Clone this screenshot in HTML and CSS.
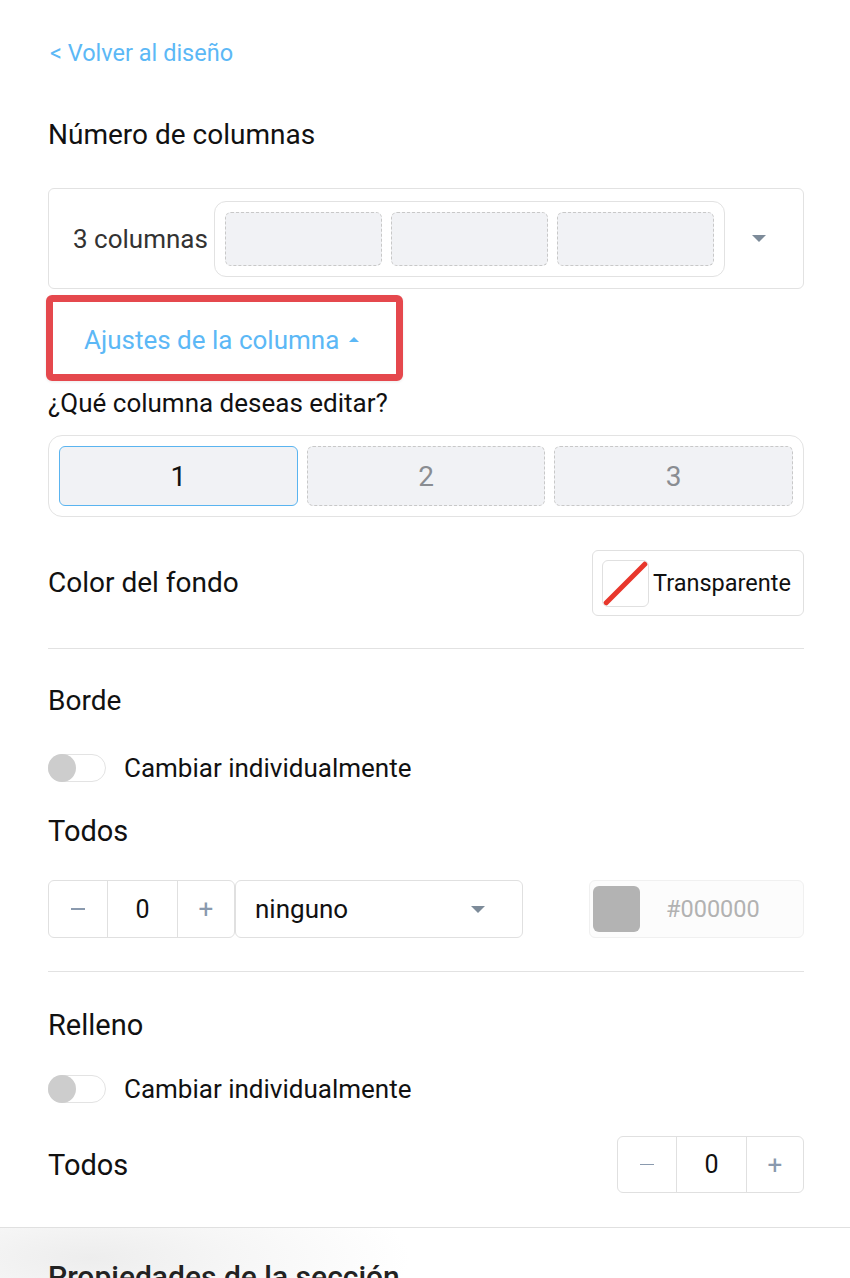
FILE: index.html
```html
<!DOCTYPE html>
<html lang="es">
<head>
<meta charset="utf-8">
<link rel="stylesheet" href="styles.css">
</head>
<body>
<div class="panel">
  <a class="back">&lt; Volver al diseño</a>
  <div class="title">Número de columnas</div>

  <div class="colbox">
    <span class="colbox-label">3 columnas</span>
    <div class="preview">
      <div class="pcell"></div>
      <div class="pcell"></div>
      <div class="pcell"></div>
    </div>
    <span class="caret-down"></span>
  </div>

  <div class="highlight">
    <span class="hl-text">Ajustes de la columna</span>
    <span class="caret-up"></span>
  </div>

  <div class="label">¿Qué columna deseas editar?</div>

  <div class="colsel">
    <div class="colbtn active">1</div>
    <div class="colbtn">2</div>
    <div class="colbtn">3</div>
  </div>

  <div class="color-row">
    <span class="heading">Color del fondo</span>
    <div class="transp-btn">
      <span class="swatch">
        <svg width="45" height="45" viewBox="0 0 45 45"><line x1="3" y1="42" x2="42" y2="3" stroke="#e8372c" stroke-width="5" stroke-linecap="round"/></svg>
      </span>
      <span class="transp-text">Transparente</span>
    </div>
  </div>

  <div class="divider d1"></div>

  <div class="heading sect">Borde</div>
  <div class="toggle-row">
    <span class="toggle"><span class="knob"></span></span>
    <span class="toggle-label">Cambiar individualmente</span>
  </div>
  <div class="todos t1">Todos</div>

  <div class="border-row">
    <div class="stepper">
      <span class="st-btn minus"><span class="minus-bar"></span></span>
      <span class="st-val">0</span>
      <span class="st-btn plus">+</span>
    </div>
    <div class="select">
      <span>ninguno</span>
      <span class="caret-down"></span>
    </div>
    <div class="colorinput">
      <span class="cswatch"></span>
      <span class="ctext">#000000</span>
    </div>
  </div>

  <div class="divider d2"></div>

  <div class="heading sect2">Relleno</div>
  <div class="toggle-row tr2">
    <span class="toggle"><span class="knob"></span></span>
    <span class="toggle-label">Cambiar individualmente</span>
  </div>
  <div class="pad-row">
    <span class="todos">Todos</span>
    <div class="stepper">
      <span class="st-btn minus"><span class="minus-bar"></span></span>
      <span class="st-val">0</span>
      <span class="st-btn plus">+</span>
    </div>
  </div>
</div>
<div class="footer">
  <div class="footer-title">Propiedades de la sección</div>
</div>
</body>
</html>
```

FILE: styles.css
```css
* { box-sizing: border-box; }
html, body { margin: 0; padding: 0; background: #fff; }
body {
  font-family: Roboto, "Noto Sans", "Liberation Sans", sans-serif;
  color: #111;
  width: 850px;
  height: 1278px;
  overflow: hidden;
}
.panel {
  padding: 40px 46px 0 48px;
  display: flex;
  flex-direction: column;
}
.back {
  color: #5cb8f6;
  font-size: 23.5px;
  line-height: 26px;
  margin-left: 2px;
}
.title {
  font-size: 28px;
  line-height: 32px;
  margin-top: 53px;
}
.colbox {
  margin-top: 37px;
  height: 101px;
  border: 1px solid #e2e2e2;
  border-radius: 6px;
  display: flex;
  align-items: center;
  padding-left: 24px;
}
.colbox-label {
  font-size: 26px;
  color: #333;
  margin-right: 6px;
  white-space: nowrap;
}
.preview {
  display: flex;
  gap: 9px;
  padding: 10px;
  border: 1px solid #e2e2e2;
  border-radius: 12px;
}
.pcell {
  width: 157px;
  height: 54px;
  background: #f1f2f5;
  border: 1px dashed #c8c8c8;
  border-radius: 6px;
}
.caret-down {
  width: 0;
  height: 0;
  border-left: 7px solid transparent;
  border-right: 7px solid transparent;
  border-top: 7px solid #7d8b99;
  margin-left: auto;
  margin-right: 37px;
}
.highlight {
  margin-top: 6px;
  margin-left: -2px;
  width: 357px;
  height: 86px;
  border: 7px solid #e5484d;
  border-radius: 6px;
  display: flex;
  align-items: center;
  padding-left: 31px;
  padding-top: 3px;
  box-shadow: 0 1px 3px rgba(0,0,0,0.08);
}
.hl-text {
  color: #5cb8f6;
  font-size: 26px;
}
.caret-up {
  width: 0;
  height: 0;
  border-left: 5px solid transparent;
  border-right: 5px solid transparent;
  border-bottom: 5px solid #5cb8f6;
  margin-left: 10px;
}
.label {
  font-size: 26px;
  line-height: 26px;
  margin-top: 9px;
}
.heading {
  font-size: 28px;
  line-height: 32px;
}
.colsel {
  margin-top: 19px;
  height: 82px;
  border: 1px solid #e3e3e3;
  border-radius: 14px;
  padding: 0 10px;
  display: flex;
  align-items: center;
  gap: 9px;
}
.colbtn {
  flex: 1;
  height: 60px;
  background: #f1f2f5;
  border: 1px dashed #c8c8c8;
  border-radius: 6px;
  display: flex;
  align-items: center;
  justify-content: center;
  font-size: 28px;
  color: #8a8d92;
}
.colbtn.active {
  border: 1px solid #5ab4f0;
  color: #111;
}
.color-row {
  margin-top: 33px;
  height: 66px;
  display: flex;
  align-items: center;
  justify-content: space-between;
}
.transp-btn {
  width: 212px;
  height: 66px;
  border: 1px solid #e0e0e0;
  border-radius: 6px;
  display: flex;
  align-items: center;
  padding-left: 9px;
}
.swatch {
  width: 47px;
  height: 47px;
  border: 1px solid #e0e0e0;
  border-radius: 6px;
  display: flex;
  align-items: center;
  justify-content: center;
  overflow: hidden;
}
.swatch svg { display: block; }
.transp-text {
  font-size: 23.5px;
  margin-left: 4px;
}
.divider {
  height: 1px;
  background: #e2e2e2;
}
.d1 { margin-top: 32px; }
.d2 { margin-top: 33px; }
.heading.sect { margin-top: 36px; }
.heading.sect2 { margin-top: 37px; font-size: 29px; }
.toggle-row {
  margin-top: 37px;
  height: 28px;
  display: flex;
  align-items: center;
}
.toggle-row.tr2 { margin-top: 34px; }
.toggle {
  width: 58px;
  height: 28px;
  border: 1px solid #e3e3e3;
  border-radius: 14px;
  position: relative;
  background: #fff;
}
.knob {
  position: absolute;
  left: -1px;
  top: -1px;
  width: 28px;
  height: 28px;
  border-radius: 50%;
  background: #cdcdcd;
}
.toggle-label {
  font-size: 26px;
  margin-left: 18px;
}
.todos {
  font-size: 29px;
  line-height: 32px;
}
.todos.t1 { margin-top: 33px; }
.border-row {
  margin-top: 33px;
  height: 58px;
  display: flex;
}
.stepper {
  width: 187px;
  height: 100%;
  border: 1px solid #e0e0e0;
  border-radius: 6px;
  display: flex;
}
.st-btn {
  width: 58px;
  display: flex;
  align-items: center;
  justify-content: center;
  color: #8a9aae;
  font-size: 26px;
}
.minus-bar {
  width: 14px;
  height: 1.5px;
  background: #8a9aae;
}
.st-btn.plus { width: 57px; border-left: 1px solid #e0e0e0; }
.st-val {
  flex: 1;
  border-left: 1px solid #e0e0e0;
  display: flex;
  align-items: center;
  justify-content: center;
  font-size: 25px;
}
.select {
  width: 288px;
  border: 1px solid #e0e0e0;
  border-radius: 6px;
  display: flex;
  align-items: center;
  padding-left: 19px;
  font-size: 26px;
}
.select .caret-down { margin-right: 37px; }
.colorinput {
  margin-left: auto;
  width: 215px;
  border: 1px solid #f0f0f0;
  border-radius: 6px;
  background: #fcfcfc;
  display: flex;
  align-items: center;
  padding-left: 3px;
}
.cswatch {
  width: 47px;
  height: 46px;
  border-radius: 6px;
  background: #b3b3b3;
}
.ctext {
  margin-left: 26px;
  font-size: 23.5px;
  color: #b2b2b2;
}
.pad-row {
  margin-top: 33px;
  height: 57px;
  display: flex;
  align-items: center;
  justify-content: space-between;
}
.pad-row .stepper { height: 57px; }
.footer {
  margin-top: 34px;
  border-top: 1px solid #e0e0e0;
  padding: 33px 48px 0;
  height: 200px;
  background: radial-gradient(ellipse 320px 90px at 90px 30px, #ededed 0%, #f6f6f6 45%, #fff 100%);
}
.footer-title {
  font-size: 30px;
  line-height: 32px;
  font-weight: 500;
  color: #222;
}
```
